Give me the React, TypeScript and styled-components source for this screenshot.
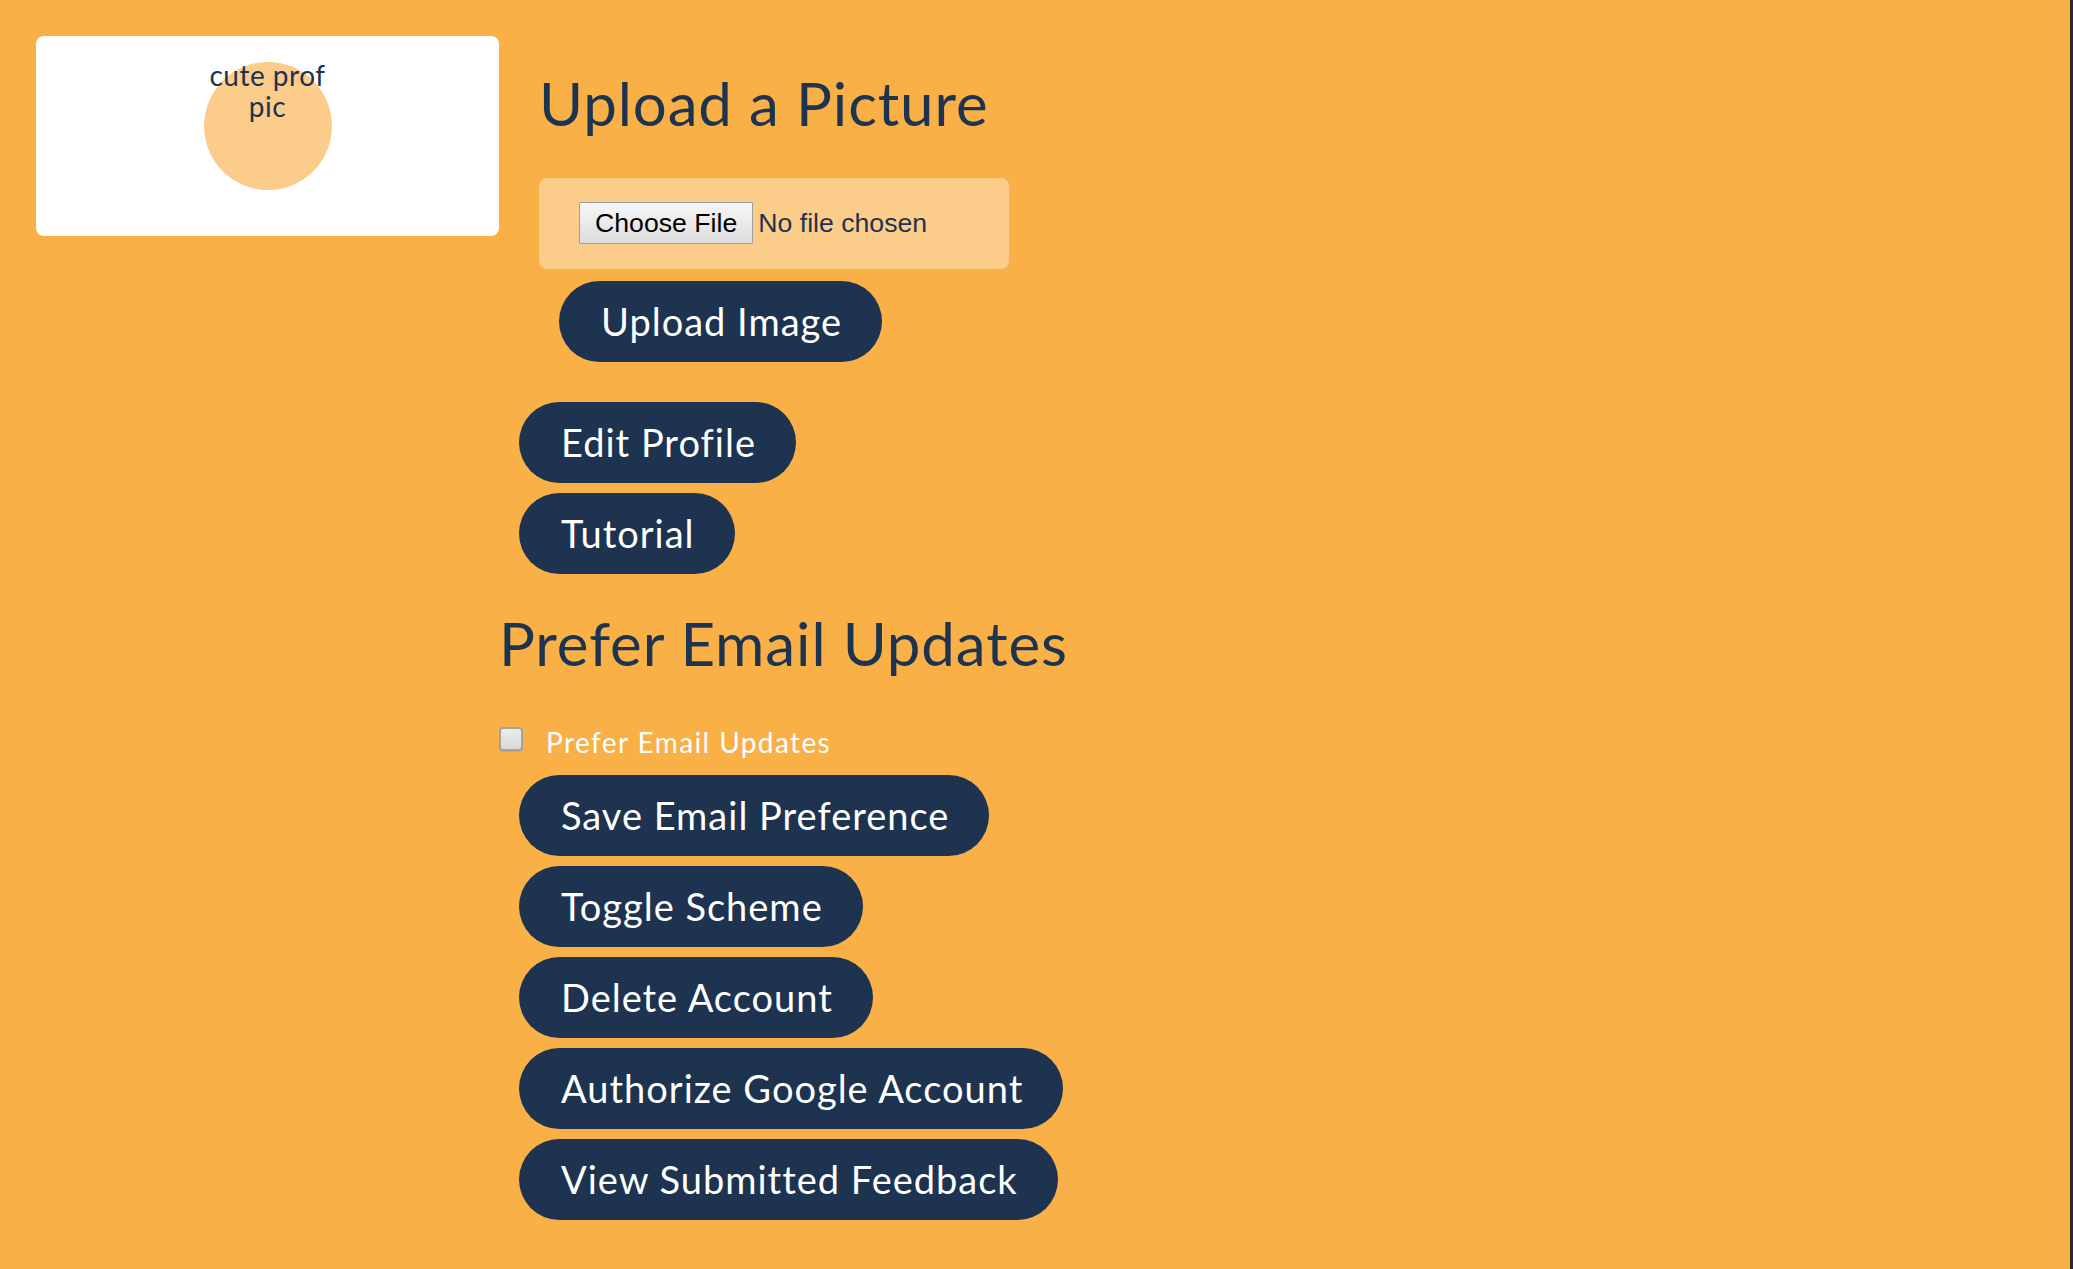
import styled, { createGlobalStyle } from 'styled-components';

const navy = '#1d3350';
const orange = '#f9b046';
const peach = '#fccc8b';

const GlobalStyle = createGlobalStyle`
  html, body {
    margin: 0;
    padding: 0;
    background: ${orange};
  }
  body {
    font-family: Lato, "Noto Sans", sans-serif;
    color: ${navy};
  }
`;

const Page = styled.div`
  display: flex;
  align-items: flex-start;
  min-height: 100vh;
  box-sizing: border-box;
  padding: 36px 0 0 36px;
  border-right: 3px solid #2a2a2a;
`;

const ProfileCard = styled.div`
  width: 463px;
  height: 200px;
  box-sizing: border-box;
  padding-top: 26px;
  background: #ffffff;
  border-radius: 8px;
  display: flex;
  justify-content: center;
`;

const Avatar = styled.div`
  width: 128px;
  height: 128px;
  border-radius: 50%;
  background: ${peach};
  text-align: center;
  font-size: 28px;
  line-height: 31px;
  letter-spacing: 0.5px;
  color: ${navy};
`;

const AvatarText = styled.div`
  margin: -2px -6px 0;
`;

const Column = styled.div`
  display: flex;
  flex-direction: column;
  align-items: flex-start;
`;

const UploadSection = styled.div`
  display: flex;
  flex-direction: column;
  align-items: flex-start;
  margin-left: 40px;
`;

const Heading = styled.h1<{ $top: number }>`
  margin: ${(p) => p.$top}px 0 0 0;
  font-size: 60px;
  line-height: 72px;
  font-weight: 400;
  color: ${navy};
  letter-spacing: 0.9px;
`;

const FileBox = styled.div`
  margin-top: 39px;
  width: 470px;
  box-sizing: border-box;
  padding: 24px 40px 25px;
  background: ${peach};
  border-radius: 8px;
  display: flex;
  align-items: center;
  gap: 5px;
  font-family: "Liberation Sans", Arial, sans-serif;
  font-size: 26.67px;
`;

const FileButton = styled.button`
  height: 42px;
  box-sizing: border-box;
  padding: 0 15px;
  border: 1px solid #a0a0a0;
  border-radius: 1px;
  background: linear-gradient(#f7f7f7, #dddddd);
  color: #000;
  font: inherit;
  line-height: 40px;
`;

const FileStatus = styled.span`
  color: ${navy};
  line-height: 42px;
`;

const PillButton = styled.button<{ $top?: number; $left?: number }>`
  margin: ${(p) => p.$top ?? 10}px 0 0 ${(p) => p.$left ?? 20}px;
  height: 81px;
  box-sizing: border-box;
  padding: 0 40px 0 42px;
  border: none;
  border-radius: 41px;
  background: ${navy};
  color: #ffffff;
  font-family: Lato, "Noto Sans", sans-serif;
  font-size: 38px;
  letter-spacing: 1px;
  line-height: 1.2;
  white-space: nowrap;
  cursor: pointer;
`;

const CheckRow = styled.label`
  margin-top: 46px;
  display: flex;
  align-items: flex-start;
  height: 34px;
  color: #ffffff;
  font-size: 28px;
  line-height: 34px;
  letter-spacing: 1.4px;
`;

const Check = styled.input`
  appearance: none;
  margin: 2px 23px 0 0;
  width: 24px;
  height: 24px;
  box-sizing: border-box;
  border: 2px solid #a3a3a3;
  border-radius: 4px;
  background: linear-gradient(#ececec, #dadada);
  box-shadow: 0 1px 1px rgba(0, 0, 0, 0.08);
`;

export default function App() {
  return (
    <>
      <GlobalStyle />
      <Page>
        <ProfileCard>
          <Avatar>
            <AvatarText>cute prof pic</AvatarText>
          </Avatar>
        </ProfileCard>
        <Column>
          <UploadSection>
            <Heading $top={31}>Upload a Picture</Heading>
            <FileBox>
              <FileButton type="button">Choose File</FileButton>
              <FileStatus>No file chosen</FileStatus>
            </FileBox>
            <PillButton $top={12}>Upload Image</PillButton>
          </UploadSection>
          <PillButton $top={40}>Edit Profile</PillButton>
          <PillButton>Tutorial</PillButton>
          <Heading $top={33}>Prefer Email Updates</Heading>
          <CheckRow>
            <Check type="checkbox" />
            Prefer Email Updates
          </CheckRow>
          <PillButton $top={16}>Save Email Preference</PillButton>
          <PillButton>Toggle Scheme</PillButton>
          <PillButton>Delete Account</PillButton>
          <PillButton>Authorize Google Account</PillButton>
          <PillButton>View Submitted Feedback</PillButton>
        </Column>
      </Page>
    </>
  );
}
